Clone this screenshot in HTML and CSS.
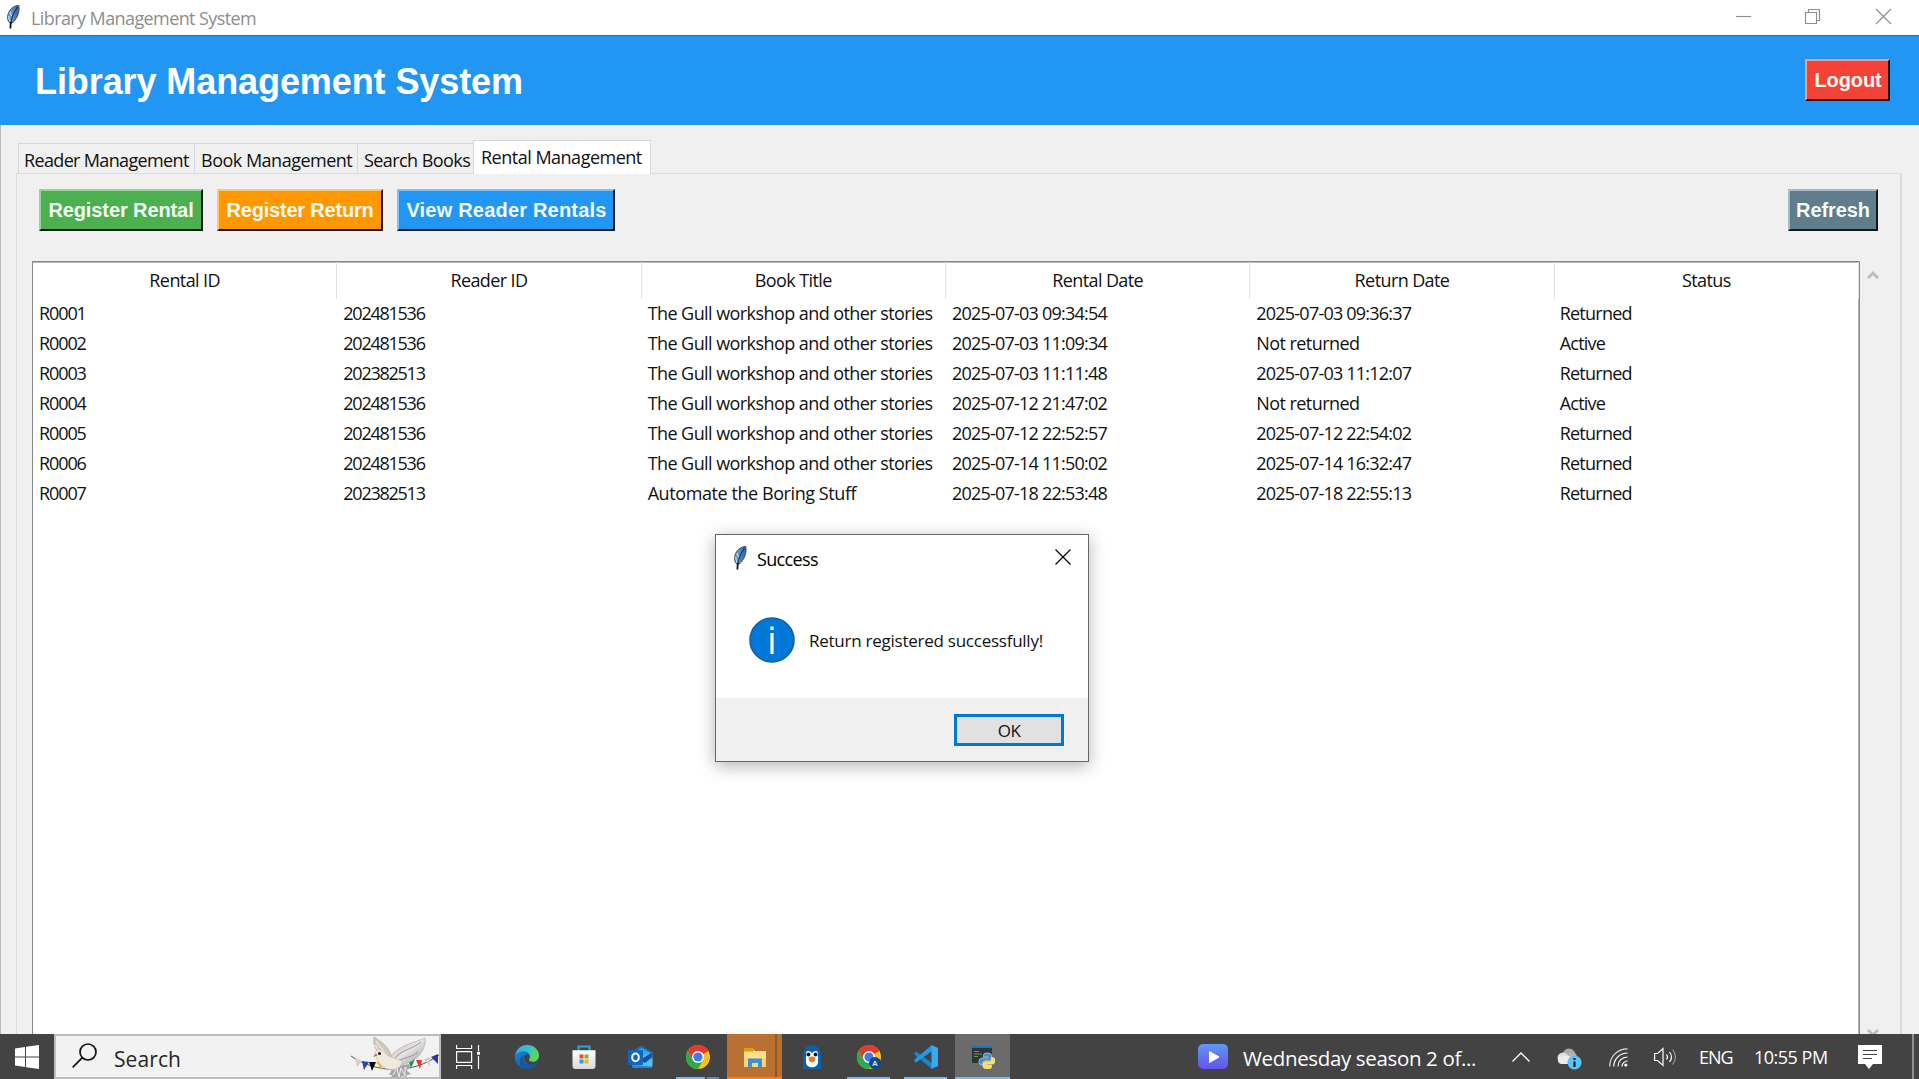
FILE: index.html
```html
<!DOCTYPE html>
<html lang="en">
<head>
<meta charset="utf-8">
<title>Library Management System</title>
<link rel="stylesheet" href="styles.css">
</head>
<body>
<svg class="defs" width="0" height="0">
  <defs>
    <linearGradient id="gFeather" x1="0" y1="0" x2="1" y2="0"><stop offset="0" stop-color="#7fb0dc"/><stop offset="1" stop-color="#2a62a4"/></linearGradient>
    <linearGradient id="gEdge" x1="0" y1="0" x2="1" y2=".4"><stop offset="0" stop-color="#2aa9e8"/><stop offset=".55" stop-color="#35c1d8"/><stop offset="1" stop-color="#62d849"/></linearGradient>
    <linearGradient id="gEdgeB" x1="0" y1="0" x2="1" y2="1"><stop offset="0" stop-color="#1b8fe0"/><stop offset="1" stop-color="#114a8b"/></linearGradient>
    <linearGradient id="gPlay" x1="0" y1="0" x2="0" y2="1"><stop offset="0" stop-color="#5f97f6"/><stop offset="1" stop-color="#6455ec"/></linearGradient>
    <linearGradient id="gWing" x1="0" y1="0" x2="1" y2="1"><stop offset="0" stop-color="#b9b8bf"/><stop offset=".5" stop-color="#e6e3e0"/><stop offset="1" stop-color="#9a96a2"/></linearGradient>
    <linearGradient id="gBag" x1="0" y1="0" x2="0" y2="1"><stop offset="0" stop-color="#ffffff"/><stop offset="1" stop-color="#d9d9dc"/></linearGradient>
    <symbol id="feather" viewBox="0 0 14 24">
      <path d="M4.400 18.500C1 16 .6 11 3.400 6 5.500 2.600 9 .5 12.800.4 13.600 5 12.600 10 9.500 14.500 8 16.800 6.500 18 4.400 18.500Z" fill="url(#gFeather)" stroke="#3a4450" stroke-width=".9"/>
      <path d="M11.500 2C8 7 5.500 12 4.800 18" fill="none" stroke="#16304f" stroke-width="1.100"/>
      <path d="M4.800 16.500 4.400 23.500" stroke="#0d1420" stroke-width="1.800"/>
      <path d="M2.500 11 4 17M4 7l1.500 4" stroke="#cfe0f0" stroke-width="1"/>
    </symbol>
    <symbol id="chrome" viewBox="0 0 24 24">
      <circle cx="12" cy="12" r="12" fill="#fbc116"/>
      <path d="M12 12 1.600 6A12 12 0 0 1 22.400 6Z" fill="#e33b2e"/>
      <path d="M12 6h10.400A12 12 0 0 0 1.600 6L6.800 15Z" fill="#e33b2e"/>
      <path d="M1.600 6A12 12 0 0 0 12 24l5.200-9L12 12 6.800 15Z" fill="#2da94f"/>
      <circle cx="12" cy="12" r="6" fill="#fff"/><circle cx="12" cy="12" r="4.600" fill="#3b7ded"/>
    </symbol>
  </defs>
</svg>

<div class="screen">
  <div class="titlebar">
    <svg class="title-icon" width="14" height="24"><use href="#feather"/></svg>
    <span class="title-text">Library Management System</span>
    <div class="window-controls">
      <svg width="160" height="20" viewBox="0 0 160 20" fill="none" stroke="#8d8d8d" stroke-width="1.100">
        <path d="M0 10.500h15"/>
        <path d="M69.500 6.500h11v11h-11zM72.500 6V3.500h11v11H81"/>
        <path d="M140 3l15 15M155 3l-15 15"/>
      </svg>
    </div>
  </div>

  <header class="header">
    <h1>Library Management System</h1>
    <button class="btn logout">Logout</button>
  </header>

  <main class="body">
    <nav class="tabs">
      <div class="tab t1">Reader Management</div>
      <div class="tab t2">Book Management</div>
      <div class="tab t3">Search Books</div>
      <div class="tab active">Rental Management</div>
    </nav>
    <section class="pane">
      <div class="toolbar">
        <button class="btn rental">Register Rental</button>
        <button class="btn return">Register Return</button>
        <button class="btn view">View Reader Rentals</button>
        <button class="btn refresh">Refresh</button>
      </div>
      <div class="table-wrap">
        <div class="tree">
          <table>
            <thead><tr><th>Rental ID</th><th>Reader ID</th><th>Book Title</th><th>Rental Date</th><th>Return Date</th><th>Status</th></tr></thead>
            <tbody>
              <tr><td class="rid">R0001</td><td class="num">202481536</td><td>The Gull workshop and other stories</td><td class="date">2025-07-03 09:34:54</td><td class="date">2025-07-03 09:36:37</td><td class="status">Returned</td></tr>
              <tr><td class="rid">R0002</td><td class="num">202481536</td><td>The Gull workshop and other stories</td><td class="date">2025-07-03 11:09:34</td><td>Not returned</td><td class="status">Active</td></tr>
              <tr><td class="rid">R0003</td><td class="num">202382513</td><td>The Gull workshop and other stories</td><td class="date">2025-07-03 11:11:48</td><td class="date">2025-07-03 11:12:07</td><td class="status">Returned</td></tr>
              <tr><td class="rid">R0004</td><td class="num">202481536</td><td>The Gull workshop and other stories</td><td class="date">2025-07-12 21:47:02</td><td>Not returned</td><td class="status">Active</td></tr>
              <tr><td class="rid">R0005</td><td class="num">202481536</td><td>The Gull workshop and other stories</td><td class="date">2025-07-12 22:52:57</td><td class="date">2025-07-12 22:54:02</td><td class="status">Returned</td></tr>
              <tr><td class="rid">R0006</td><td class="num">202481536</td><td>The Gull workshop and other stories</td><td class="date">2025-07-14 11:50:02</td><td class="date">2025-07-14 16:32:47</td><td class="status">Returned</td></tr>
              <tr><td class="rid">R0007</td><td class="num">202382513</td><td class="auto">Automate the Boring Stuff</td><td class="date">2025-07-18 22:53:48</td><td class="date">2025-07-18 22:55:13</td><td class="status">Returned</td></tr>
            </tbody>
          </table>
        </div>
        <div class="scrollbar">
          <svg width="12" height="10" viewBox="0 0 12 10"><path d="M1 8l5-5 5 5" fill="none" stroke="#bcbcbc" stroke-width="3"/></svg>
          <svg width="12" height="10" viewBox="0 0 12 10"><path d="M1 2l5 5 5-5" fill="none" stroke="#bcbcbc" stroke-width="3"/></svg>
        </div>
      </div>
    </section>
  </main>

  <footer class="taskbar">
    <div class="start">
      <svg width="24" height="24" viewBox="0 0 24 24" fill="#fff"><path d="M0 3.400 10 2v9.500H0zM11 1.800 24 0v11.500H11zM0 12.500h10V22L0 20.600zM11 12.500h13V24l-13-1.800z"/></svg>
    </div>
    <div class="search">
      <svg class="lens" width="25" height="25" viewBox="0 0 25 25" fill="none" stroke="#111" stroke-width="1.700"><circle cx="16" cy="9" r="8"/><path d="M10.300 14.700 .7 24.300"/></svg>
      <span>Search</span>
      <svg class="dove" width="90" height="42" viewBox="350 1035 90 42">
        <path d="M351 1055c26 18 62 18 88-1" fill="none" stroke="#555" stroke-width="1"/>
        <path d="M355 1057l7 3-5 6z" fill="#d8cdc6"/><path d="M362 1060l7 1-5 8z" fill="#2d3fb4"/><path d="M369 1061h7l-4 9z" fill="#0a0a0a"/><path d="M376 1061l7-1-1 9z" fill="#f5b52c"/>
        <path d="M408 1059l7-1-4 9z" fill="#119245"/><path d="M416 1059h6l-2 9z" fill="#e6392f"/><path d="M424 1058l6-2v9z" fill="#d8cdc6"/><path d="M431 1056l7-3v10z" fill="#2638b0"/>
        <path d="M374 1036c6 4 14 8 18 20l-4 5c-6-5-16-12-14-25z" fill="#cfc8bd" stroke="#aaa59e" stroke-width=".6"/>
        <path d="M376 1040c3 6 9 10 12 17M375 1044c3 6 6 8 10 12" fill="none" stroke="#efebe4" stroke-width="1.200"/>
        <path d="M388 1059c8-14 25-17 37-22 2 6-4 19-13 23-7 4-15 5-20 4z" fill="url(#gWing)" stroke="#aaa6b0" stroke-width=".6"/>
        <path d="M395 1057c8-9 16-8 26-16M396 1061c8-5 15-4 22-10" fill="none" stroke="#8f8c99" stroke-width=".9"/>
        <path d="M393 1066l16-3c2 3-1 5-2 7l5 3-5 1-1 2-4-1-3 3-3-2-5 1 1-3-3 0z" fill="#a9a5ae"/>
        <path d="M393 1074l4-7 2 9 2-9 4 8 0-9 6 7" fill="none" stroke="#efedf0" stroke-width="1"/>
        <path d="M374.500 1053c1-5 7-6 10.500-1 3 4 10 5 17 8 1 7-10 11-17 7-6-3-7-8-10.500-14z" fill="#efe9df" stroke="#bdb6ae" stroke-width=".6"/>
        <path d="M373 1056l3-3.500 1.500 2z" fill="#e5533f"/><circle cx="379.500" cy="1052.500" r="1.500" fill="#111"/>
      </svg>
    </div>
    <div class="apps">
      <div class="app task-view">
        <svg width="24" height="24" viewBox="0 0 24 24" fill="none" stroke="#fff" stroke-width="1.200"><path d="M.6 6.600h15v10.800H.6zM.6 0v3.500h15V0M.6 24v-3.500h15V24M22.500 0v6M22.500 11v13"/><path d="M21 6.800h3v3h-3z" fill="#fff" stroke="none"/></svg>
      </div>
      <div class="app">
        <svg width="24" height="24" viewBox="0 0 24 24"><circle cx="12" cy="12" r="12" fill="url(#gEdgeB)"/><path d="M.3 10C1.500 4 6.300 0 12 0c7 0 12 5 12 10.500 0 4-3 6.300-6.300 6.300-2.700 0-4-1-4-1.800 0-.8 1.200-1.300 1.200-3.500C14.900 8.500 12 6.300 8.500 6.300 5 6.300 2 8 .3 10z" fill="url(#gEdge)"/><path d="M8.500 10.500c-2 6 3 12 10 9.500l4-2C19 24 12 25.500 7 22.500 3 19 4 12 8.500 10.500z" fill="#14589f"/><path d="M14.800 11c.3 2-1 3-1 4 .2 1 2 2 4 2 2 0 3.700-.5 4.900-1.500-1 2.500-3 4-5 4-6 1-10-4-8.300-9 2-1.500 5-1.500 5.400.5z" fill="#434343"/></svg>
      </div>
      <div class="app">
        <svg width="24" height="24" viewBox="0 0 24 24"><path d="M6.500 6V1.500h11V6" fill="none" stroke="#28a8e0" stroke-width="2"/><path d="M.5 5.300h23V21a3 3 0 0 1-3 3h-17a3 3 0 0 1-3-3z" fill="url(#gBag)"/><path d="M7.500 9.500h4v4h-4z" fill="#e8502c"/><path d="M12.500 9.500h4v4h-4z" fill="#7db72f"/><path d="M7.500 14.500h4v4h-4z" fill="#22a1e4"/><path d="M12.500 14.500h4v4h-4z" fill="#f7b51c"/></svg>
      </div>
      <div class="app">
        <svg width="25" height="24" viewBox="0 0 25 24"><path d="M3 7 13.500.8 24 7v8H3z" fill="#1672c4"/><path d="M6 7.500 13.500 3l9 5-7 7z" fill="#35a8e8"/><path d="M4 15 24.500 7v13a3 3 0 0 1-3 3H7a3 3 0 0 1-3-3z" fill="#4cc4f2"/><path d="M12 15l12.500-8v5L17 18z" fill="#1a4f9b"/><path d="M4 20l20 1.500c-.5 1-1.500 1.500-2.500 1.500H7a3 3 0 0 1-3-3z" fill="#2386d6"/><rect y="5" width="15" height="15" rx="1" fill="#0f66bd"/><ellipse cx="7.500" cy="12.400" rx="3.300" ry="3.800" fill="none" stroke="#fff" stroke-width="2"/></svg>
      </div>
      <div class="app running multi"><svg width="24" height="24"><use href="#chrome"/></svg></div>
      <div class="app attention">
        <svg width="24" height="24" viewBox="0 0 24 24"><path d="M1 4h9l2 2h11v16H1z" fill="#ffd869"/><path d="M1 3h9v3.500H1z" fill="#dca000"/><path d="M1 7h22v6H1z" fill="#ffe08a"/><path d="M5 22v-8.500h14V22h-4v-4H9v4z" fill="#3f8fdc"/></svg>
      </div>
      <div class="app">
        <svg width="20" height="24" viewBox="0 0 20 24"><path d="M1 24V10a9 10 0 0 1 18 0v14z" fill="#0b62ab"/><path d="M4 8c1-3 4-2 6 0 2-2 5-3 6 0v9c0 7-12 7-12 0z" fill="#fff"/><circle cx="6.400" cy="9.500" r="2" fill="#10161f"/><circle cx="13.600" cy="9.500" r="2" fill="#10161f"/><path d="M6.500 13c2-2 5-2 7 0 0 3-2 4.500-3.500 4.500S6.500 16 6.500 13z" fill="#d9822e"/></svg>
      </div>
      <div class="app running">
        <svg width="24" height="24" viewBox="0 0 24 24"><use href="#chrome" width="24" height="24"/><circle cx="18" cy="18" r="6" fill="#0c4a8c"/><text x="18" y="20.800" text-anchor="middle" class="avatar">A</text></svg>
      </div>
      <div class="app running">
        <svg width="24" height="24" viewBox="0 0 24 24"><path d="M2 6.500 18 18v6L.5 9.500C0 8.500 1 6.500 2 6.500z" fill="#1a86d0"/><path d="M2 17.500 18 6V0L.5 14.500c-.5 1 .5 3 1.500 3z" fill="#1f9ae6"/><path d="M17.500 0 24 3v18l-6.500 3z" fill="#35a9f4"/></svg>
      </div>
      <div class="app current">
        <svg width="24" height="24" viewBox="0 0 24 24"><path d="M1 1.500h20V18H1z" fill="#2f3437"/><path d="M.5 1h21v2H.5z" fill="#1276c3"/><path d="M3 6.500h5M3 9h8M3 11.500h4" stroke="#53a745" stroke-width="1"/><path d="M16 8c-3 0-3.500 1-3.500 2.500V12H17v1h-6c-2 0-3 1.500-3 3.500S9 20 11 20h1v-2c0-1.500 1-2.500 2.500-2.500h4c1 0 2-1 2-2v-3C20.500 8.500 19 8 16 8z" fill="#4b8bbf" stroke="#dde8ef" stroke-width=".6"/><path d="M17 24c3 0 3.500-1 3.500-2.500V20H16v-1h5.500c2 0 2.500-1.500 2.500-3.500S23 12.500 21.500 12.500h-1V14c0 1.500-1 2.500-2.500 2.500h-4c-1 0-2 1-2 2v3c0 1.500 2 2.500 5 2.500z" fill="#ffdf5a" stroke="#f4efd2" stroke-width=".6"/></svg>
      </div>
    </div>
    <div class="news">
      <svg width="30" height="25" viewBox="0 0 30 25"><rect width="30" height="25" rx="5" fill="url(#gPlay)"/><path d="M11.500 7.500v11l9.500-5.500z" fill="#fff" stroke="#fff" stroke-linejoin="round"/></svg>
      <span>Wednesday season 2 of...</span>
    </div>
    <div class="tray">
      <svg class="chev" width="18" height="10" viewBox="0 0 18 10"><path d="M.5 9.500 9 1l8.500 8.500" fill="none" stroke="#fff" stroke-width="1.300"/></svg>
      <svg class="cloud" width="25" height="22" viewBox="0 0 25 22"><circle cx="12" cy="7" r="6.500" fill="#aaa"/><rect x="9" y="5" width="11" height="9" rx="4.500" fill="#b5b5b5"/><circle cx="6" cy="10" r="5.500" fill="#dedede"/><rect x="1" y="8" width="14" height="8" rx="4" fill="#ececec"/><circle cx="17.500" cy="14.500" r="7" fill="#58c4f8"/><path d="M17.500 10v2M17.500 13.500v5.500" stroke="#123" stroke-width="2.200"/></svg>
      <svg class="wifi" width="19" height="19" viewBox="0 0 19 19" fill="none" stroke="#fff" stroke-width="1.200"><path d="M.7 18.500C.7 8.500 8.500.8 18.500.8" opacity=".85"/><path d="M4.800 18.500C4.800 11 11 5 18.500 5M9 18.500c0-5.500 4-9.500 9.500-9.500M13 18.500c0-3 2.500-5.500 5.500-5.500"/><circle cx="16.800" cy="17" r="1.600" fill="#fff" stroke="none"/></svg>
      <svg class="vol" width="23" height="20" viewBox="0 0 23 20" fill="none" stroke="#fff" stroke-width="1.200"><path d="M.6 6.500h3L9 1.500v17l-5.400-5h-3z"/><path d="M12.500 7.500q2 2.500 0 5M15.500 5q4 5 0 10"/><path d="M18.500 2.500q6 7.500 0 15" opacity=".45"/></svg>
      <span class="lang">ENG</span>
      <span class="clock">10:55 PM</span>
      <svg class="note" width="24" height="24" viewBox="0 0 24 24"><path d="M0 0h24v19H15l-4 5-4-5H0z" fill="#fff"/><path d="M5 5.500h14M5 9.500h14M5 13.500h9" stroke="#434343" stroke-width="1.200"/></svg>
      <i class="peek"></i>
    </div>
  </footer>
</div>

<div class="dialog">
  <div class="dialog-title">
    <svg width="14" height="24"><use href="#feather"/></svg>
    <span>Success</span>
    <svg class="close" width="16" height="16" viewBox="0 0 16 16"><path d="M.5.5l15 15M15.500.5l-15 15" stroke="#000" stroke-width="1.200"/></svg>
  </div>
  <div class="dialog-body">
    <svg width="46" height="46" viewBox="0 0 46 46"><circle cx="23" cy="23" r="22" fill="#0078d7" stroke="#0f5ea5" stroke-width="1.500"/><path d="M23 9.500v3.500M23 16v21" stroke="#fff" stroke-width="3.200"/></svg>
    <span>Return registered successfully!</span>
  </div>
  <div class="dialog-foot"><button class="ok">OK</button></div>
</div>
</body>
</html>
```
FILE: styles.css
```css
* { box-sizing: border-box; }
html, body { margin: 0; height: 100%; overflow: hidden; }
body { font-family: "Open Sans", "Noto Sans", sans-serif; font-size: 18px; letter-spacing: -.6px; color: #111; }
svg { display: block; flex: none; }
.defs { position: absolute; }
.screen { height: 1079px; display: flex; flex-direction: column; background: #f0f0f0; }

.titlebar { height: 35px; flex: none; display: flex; align-items: center; background: #fff; padding: 0 31px 0 6px; }
.title-icon { margin-top: -2px; }
.title-text { margin-left: 11px; padding-top: 1px; color: #8d8d8d; }
.window-controls { margin-left: auto; margin-right: -8px; margin-top: -3px; }

.header { height: 90px; flex: none; display: flex; align-items: center; justify-content: space-between; background: #2196f3; border-top: 1px solid #1a74bd; padding: 0 29px 0 35px; }
.header h1 { margin: 0; font: bold 36px "Liberation Sans", sans-serif; letter-spacing: -.09px; color: #fff; padding-top: 2px; }

.btn { height: 42px; padding: 1px 0 0; border: 2px solid; border-radius: 0; font: bold 20px "Liberation Sans", sans-serif; letter-spacing: -.1px; color: #f5fbf5; }
.logout { width: 85px; margin-bottom: 1px; padding-left: 1px; background: #f44336; border-color: #f99a93 #231012 #231012 #f99a93; }
.rental { width: 164px; background: #4caf50; border-color: #94d497 #071a08 #071a08 #94d497; }
.return { width: 166px; margin-left: 14px; background: #ff9800; border-color: #ffc670 #1e1303 #1e1303 #ffc670; letter-spacing: -.2px; }
.view { width: 218px; margin-left: 14px; padding-left: 1px; background: #2196f3; border-color: #7cc2f8 #051626 #051626 #7cc2f8; letter-spacing: .2px; }
.refresh { width: 90px; margin-left: auto; background: #607d8b; border-color: #a6bac4 #11181b #11181b #a6bac4; }

.body { flex: 1; min-height: 0; display: flex; flex-direction: column; padding: 15px 17px 0 15px; border-left: 1px solid #b9b9b9; }
.tabs { display: flex; align-items: flex-end; height: 34px; flex: none; padding-left: 2px; margin-bottom: -1px; z-index: 1; }
.tab { height: 31px; line-height: 32px; padding-left: 5px; border: 1px solid #d9d9d9; border-right: 0; border-bottom: 0; white-space: nowrap; }
.t1 { width: 176px; letter-spacing: -.65px; }
.t2 { width: 163px; padding-left: 6px; letter-spacing: -.5px; }
.t3 { width: 116px; padding-left: 6px; letter-spacing: -.57px; }
.tab.active { width: 178px; height: 34px; background: #fff; padding-left: 7px; border-right: 1px solid #d9d9d9; line-height: 33px; letter-spacing: -.5px; }
.pane { flex: 1; min-height: 0; display: flex; flex-direction: column; border: 1px solid #dcdcdc; border-width: 1px 2px 0 1px; padding: 15px 0 0 15px; }
.toolbar { display: flex; flex: none; padding: 0 22px 0 7px; margin-bottom: 30px; }
.table-wrap { flex: 1; min-height: 0; display: flex; }
.tree { width: 1828px; background: #fff; border: 1px solid #85888f; border-bottom: 0; box-shadow: inset -1px 1px #b5b7bb; }
table { width: 1826px; border-collapse: separate; border-spacing: 0; table-layout: fixed; }
th, td { padding: 0; white-space: nowrap; }
th { height: 37px; font-weight: 400; border-right: 1px solid #e2e2e2; letter-spacing: -.6px; padding: 0 0 1px; }
td { height: 30px; padding-left: 6px; line-height: 28px; letter-spacing: -.57px; }
td.auto { letter-spacing: -.42px; }
td.rid { letter-spacing: -1.100px; }
td.num { letter-spacing: -1.250px; }
td.date { letter-spacing: -.78px; }
td.status { padding-left: 5px; letter-spacing: -.75px; }
tbody { transform: translateY(-1px); }
.scrollbar { flex: 1; display: flex; flex-direction: column; align-items: center; justify-content: space-between; padding: 9px 14px 0 0; margin-bottom: -4px; }

.taskbar { height: 45px; flex: none; position: relative; display: flex; background: #434343; color: #fff; }
.start { width: 54px; display: flex; align-items: center; padding-left: 15px; }
.search { width: 387px; display: flex; align-items: center; background: #f2f2f2; border: 2px solid #bdbdbd; padding-left: 16px; color: #252525; font-size: 21px; letter-spacing: 0; }
.search span { margin-left: 17px; padding-top: 4px; letter-spacing: .1px; }
.dove { margin-left: auto; margin-right: -1px; }
.lens { margin-top: -2px; }
.apps { display: flex; margin-left: -1px; }
.app { width: 55px; margin-right: 2px; height: 45px; display: flex; align-items: center; justify-content: center; }
.task-view { margin-right: 4px; }
.running { background: linear-gradient(#76b9ed, #76b9ed) 50% 100% / 43px 2px no-repeat; }
.multi { background: linear-gradient(90deg, #76b9ed 29px, #434343 29px 31px, #5f8db1 31px) 50% 100% / 43px 2px no-repeat; }
.attention { background: linear-gradient(90deg, #b87033 48px, #94571f 48px 50px, #b87033 50px); border-bottom: 2px solid #ff7b0c; padding-top: 2px; }
.current { background: #6b6b6b; border-bottom: 2px solid #76b9ed; padding-top: 2px; }
.avatar { font: bold 8px "Liberation Sans", sans-serif; fill: #cfe2f7; letter-spacing: 0; }
.news { display: flex; align-items: center; margin-left: auto; width: 279px; margin-right: 35px; font-size: 20.500px; letter-spacing: -.35px; white-space: nowrap; }
.news span { margin-left: 15px; padding-top: 3px; }
.tray { width: 407px; display: flex; align-items: center; white-space: nowrap; }
.cloud { margin-left: 27px; margin-top: 4px; }
.wifi { margin-left: 27px; margin-top: 2px; }
.vol { margin-left: 26px; }
.lang { width: 36px; margin-left: 22px; letter-spacing: -1px; padding-top: 1px; }
.clock { width: 76px; margin-left: 19px; letter-spacing: -.5px; padding-top: 1px; }
.note { margin-left: 28px; }
.peek { width: 2px; height: 45px; background: #8f8f8f; margin-left: 30px; }

.dialog { position: absolute; left: 715px; top: 534px; width: 374px; height: 228px; display: flex; flex-direction: column; background: #fff; border: 1px solid #666; box-shadow: 0 4px 16px rgba(0, 0, 0, .3); }
.dialog-title { display: flex; align-items: center; height: 45px; padding: 0 17px 0 17px; color: #000; }
.dialog-title span { margin-left: 10px; padding-top: 2px; letter-spacing: -.65px; }
.close { margin-left: auto; margin-top: -1px; }
.dialog-body { flex: 1; display: flex; align-items: center; padding: 1px 0 0 33px; }
.dialog-body span { margin-left: 14px; padding-top: 1px; font-size: 17px; letter-spacing: -.25px; }
.dialog-foot { height: 63px; background: #f0f0f0; display: flex; justify-content: flex-end; padding: 16px 24px 0 0; }
.ok { width: 110px; height: 32px; padding: 0; border: 3px solid #0078d7; background: #e1e1e1; font: 17px "Open Sans", sans-serif; letter-spacing: -.6px; color: #111; }
```
